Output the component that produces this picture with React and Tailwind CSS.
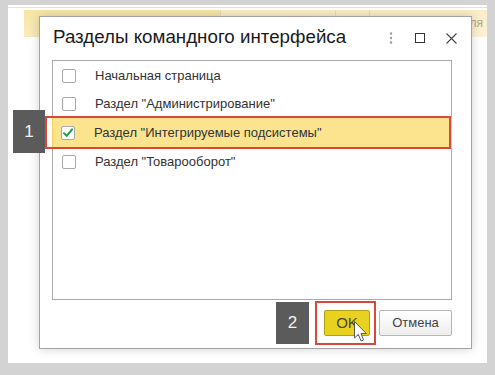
import React from "react";

const font = { fontFamily: '"Liberation Sans", Arial, sans-serif' };

function Check({ checked }) {
  return (
    <div className="w-[14px] h-[14px] border border-[#a8a8a8] rounded-[2px] bg-white shrink-0 flex items-center justify-center">
      {checked && (
        <svg width="14" height="14" viewBox="0 0 14 14" className="block">
          <path d="M2.3 7.2 L5.5 10.4 L11.8 2.8" fill="none" stroke="#1f9a48" strokeWidth="2.3" strokeLinecap="round" strokeLinejoin="round" />
        </svg>
      )}
    </div>
  );
}

function Row({ label, checked, hl, h }) {
  return (
    <div
      className={`flex items-center pl-[9px] ${h} ${hl ? "bg-[#fce48f] border border-[#f3cd58] -mx-px" : ""}`}
    >
      <div className={hl ? "-ml-px" : ""}>
        <Check checked={checked} />
      </div>
      <span className="ml-[19px] text-[13px] text-[#333] leading-none">{label}</span>
    </div>
  );
}

export default function App() {
  return (
    <div className="relative w-[495px] h-[375px] bg-[#d3d3d3] overflow-hidden" style={font}>
      {/* background page */}
      <div className="absolute left-[8px] top-[5px] w-[479px] h-[358px] bg-white">
        <div className="h-[2px]" />
        <div className="h-px bg-[#e2e2e2]" />
        <div className="flex h-[27px] mt-[2px] ml-[16px]">
          <div className="w-[197px] bg-gradient-to-b from-[#f8e6a6] to-[#f9eab8] border-r border-[#e6dcc0]" />
          <div className="w-[115px] bg-gradient-to-b from-[#fbeec6] to-[#fcf2d4] border-r border-[#e6dcc0]" />
          <div className="w-[34px] bg-gradient-to-b from-[#fbeec6] to-[#fcf2d4] border-r border-[#e6dcc0]" />
          <div className="flex-1 bg-gradient-to-b from-[#fbeec6] to-[#fcf2d4] flex items-start justify-end pr-[4px] pt-[4px]">
            <span className="text-[12px] text-[#b0a890]">для</span>
          </div>
        </div>
      </div>

      {/* dialog */}
      <div className="absolute left-[39px] top-[16px] w-[433px] h-[333px] bg-white border border-[#a3a3a3] shadow-[0_0_10px_rgba(0,0,0,0.18)]">
        <div className="h-[43px] flex items-start pl-[13px] pt-[8px]">
          <div className="text-[18.75px] leading-[24px] text-[#1a1a1a] flex-1">Разделы командного интерфейса</div>
          <div className="flex items-center h-[24px] mt-[1px] pr-[14px]">
            <svg width="4" height="12" viewBox="0 0 4 12" className="mr-[22px]">
              <circle cx="2" cy="1.5" r="1.2" fill="#9a9a9a" />
              <circle cx="2" cy="6" r="1.2" fill="#9a9a9a" />
              <circle cx="2" cy="10.5" r="1.2" fill="#9a9a9a" />
            </svg>
            <div className="w-[10px] h-[10px] border border-[#333] mr-[21px]" />
            <svg width="11" height="11" viewBox="0 0 11 11">
              <path d="M0.5 0.5 L10.5 10.5 M10.5 0.5 L0.5 10.5" stroke="#444" strokeWidth="1.1" />
            </svg>
          </div>
        </div>
        <div className="ml-[12px] w-[400px] h-[240px] border border-[#a9a9a9] pt-[0.5px]">
          <Row label="Начальная страница" h="h-[28.5px]" />
          <Row label='Раздел "Администрирование"' h="h-[27px]" />
          <Row label='Раздел "Интегрируемые подсистемы"' checked hl h="h-[31px]" />
          <Row label='Раздел "Товарооборот"' h="h-[27px]" />
        </div>
        <div className="flex justify-end gap-[9px] pr-[19px] mt-[10px]">
          <div className="w-[46px] h-[26px] rounded-[2px] bg-[#e8d11f] border border-[#b39f1a] flex items-center justify-center text-[15px] text-[#4a4633]">
            OK
          </div>
          <div className="w-[73px] h-[26px] rounded-[2px] bg-gradient-to-b from-white to-[#eeeeee] border border-[#b5b5b5] flex items-center justify-center text-[13px] text-[#444]">
            Отмена
          </div>
        </div>
      </div>

      {/* annotations */}
      <div className="absolute left-[45px] top-[116px] w-[406px] h-[33px] border-2 border-[#d9493b]" />
      <div className="absolute left-[13px] top-[110px] w-[32px] h-[43px] bg-[#5b5b5b] flex items-center justify-center text-[17px] text-[#f2f2f2]">
        1
      </div>
      <div className="absolute left-[315px] top-[301px] w-[61px] h-[44px] border-2 border-[#d9493b]" />
      <div className="absolute left-[276px] top-[302px] w-[33px] h-[42px] bg-[#5b5b5b] flex items-center justify-center text-[17px] text-[#f2f2f2]">
        2
      </div>

      {/* cursor */}
      <svg className="absolute left-[354px] top-[321px]" width="14" height="24" viewBox="0 0 14 24">
        <path d="M0.5 0.5 L0.5 17 L4.3 13.4 L7 20 L9.6 18.9 L7 12.6 L12.3 12.6 Z" fill="#fff" stroke="#555" strokeWidth="1" strokeLinejoin="round" />
      </svg>
    </div>
  );
}
